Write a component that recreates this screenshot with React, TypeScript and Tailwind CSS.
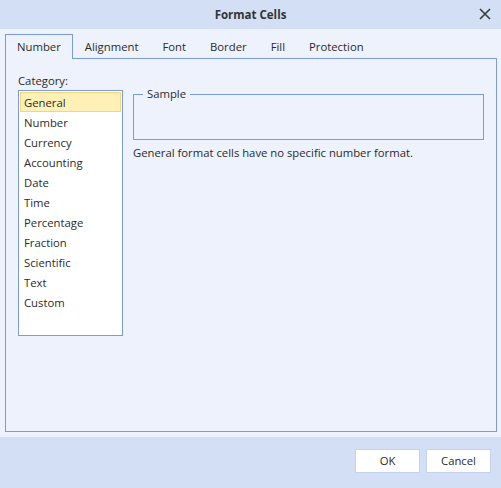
import { useState } from 'react'

const tabs = ['Number', 'Alignment', 'Font', 'Border', 'Fill', 'Protection']
const categories = [
  'General',
  'Number',
  'Currency',
  'Accounting',
  'Date',
  'Time',
  'Percentage',
  'Fraction',
  'Scientific',
  'Text',
  'Custom',
]

export default function App() {
  const [activeTab, setActiveTab] = useState('Number')
  const [selected, setSelected] = useState('General')

  return (
    <div
      className="w-[501px] h-[488px] flex flex-col bg-[#edf2fd] text-[#2b2b2b] text-[11.3px] select-none"
      style={{ fontFamily: '"Open Sans", "Noto Sans", sans-serif' }}
    >
      {/* title bar */}
      <div className="relative h-[29px] shrink-0 flex items-center justify-center bg-[#d3dff5]">
        <span className="font-bold text-[11.5px] text-[#333]">Format Cells</span>
        <button className="absolute right-[8px] top-[6px] w-[16px] h-[16px] flex items-center justify-center">
          <svg width="12" height="12" viewBox="0 0 12 12">
            <path d="M1 1 L11 11 M11 1 L1 11" stroke="#3a3a3a" strokeWidth="1.6" fill="none" />
          </svg>
        </button>
      </div>

      {/* body */}
      <div className="flex-1 flex flex-col pl-[5px] pr-[4px] pt-[5px] pb-[5px]">
        <div className="flex h-[24px] shrink-0">
          {tabs.map(tab => (
            <button
              key={tab}
              onClick={() => setActiveTab(tab)}
              className={
                tab === activeTab
                  ? 'relative z-10 h-[25px] px-[11px] border border-b-0 border-[#7b9bd6] bg-[#edf2fd] leading-[24px]'
                  : 'h-[24px] px-[12px] leading-[26px]'
              }
            >
              {tab}
            </button>
          ))}
        </div>

        <div className="flex-1 border border-[#7b9bd6] flex gap-[10px] pl-[12px] pr-[12px] pt-[13px]">
          <div className="flex flex-col">
            <div className="h-[16px] leading-[17px] mb-[2px]">Category:</div>
            <div className="w-[105px] h-[246px] bg-white border border-[#7b9bd6] p-[1px]">
              {categories.map(cat => (
                <div
                  key={cat}
                  onClick={() => setSelected(cat)}
                  className={
                    cat === selected
                      ? 'h-[20px] leading-[20px] pl-[3px] bg-[#fff1b6] border border-[#f3d67c]'
                      : 'h-[20px] leading-[20px] pl-[3px] border border-transparent'
                  }
                >
                  {cat}
                </div>
              ))}
            </div>
          </div>

          <div className="flex-1 flex flex-col pt-[14px]">
            <fieldset className="h-[54px] border border-[#7b9bd6] px-[9px]">
              <legend className="px-[4px] leading-[16px]">Sample</legend>
            </fieldset>
            <div className="mt-[5px] leading-[16px]">
              General format cells have no specific number format.
            </div>
          </div>
        </div>
      </div>

      {/* footer */}
      <div className="h-[51px] shrink-0 bg-[#d3dff5] flex justify-end gap-[6px] pt-[12px] pr-[10px]">
        <button className="w-[65px] h-[24px] bg-white border border-[#c3d2ef]">OK</button>
        <button className="w-[65px] h-[24px] bg-white border border-[#c3d2ef]">Cancel</button>
      </div>
    </div>
  )
}
